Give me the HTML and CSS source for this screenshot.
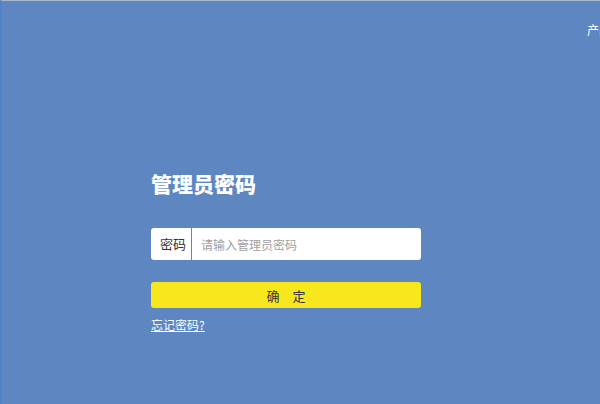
FILE: index.html
```html
<!DOCTYPE html>
<html lang="zh">
<head>
<meta charset="utf-8">
<link rel="stylesheet" href="styles.css">
</head>
<body>
<div class="page">
  <div class="topnav"><span class="product">产品</span></div>
  <div class="login">
    <h1 class="title">管理员密码</h1>
    <div class="field">
      <span class="label">密码</span>
      <input class="input" type="password" placeholder="请输入管理员密码">
    </div>
    <button class="confirm">确&emsp;定</button>
    <a class="forgot" href="#">忘记密码?</a>
  </div>
</div>
</body>
</html>
```
FILE: styles.css
```css
html, body {
  margin: 0;
  padding: 0;
  width: 600px;
  height: 404px;
  overflow: hidden;
}
body {
  font-family: "Microsoft YaHei", "Noto Sans CJK SC", sans-serif;
  background: #5e86c1;
}
.page {
  width: 600px;
  height: 404px;
  box-sizing: border-box;
  border-top: 1px solid #a9b8cf;
  border-left: 2px solid #4f82cb;
  display: flex;
  flex-direction: column;
  overflow: hidden;
}
.topnav {
  display: flex;
  justify-content: flex-end;
  height: 167px;
  padding-top: 21px;
  box-sizing: border-box;
}
.product {
  color: #fff;
  font-size: 12px;
  line-height: 16px;
  margin-right: -11px;
}
.login {
  margin-left: 149px;
  width: 270px;
  display: flex;
  flex-direction: column;
}
.title {
  margin: 0;
  color: #fff;
  font-size: 21px;
  font-weight: 900;
  line-height: 30px;
  height: 30px;
}
.field {
  margin-top: 30px;
  height: 32px;
  background: #fff;
  border-radius: 3px;
  display: flex;
  align-items: center;
}
.label {
  width: 41px;
  box-sizing: border-box;
  padding-left: 9px;
  font-size: 13px;
  color: #333;
  border-right: 1px solid #5e86c1;
  height: 32px;
  line-height: 32px;
}
.input {
  flex: 1;
  border: 0;
  outline: 0;
  background: transparent;
  padding: 0 0 0 9px;
  font-family: inherit;
  font-size: 12px;
  color: #333;
  height: 30px;
}
.input::placeholder {
  color: #a0a0a0;
}
.confirm {
  margin-top: 22px;
  height: 26px;
  border: 0;
  border-radius: 3px;
  background: #f8e71c;
  color: #333;
  font-family: inherit;
  font-size: 13px;
  padding: 0;
}
.forgot {
  margin-top: 9px;
  align-self: flex-start;
  color: #fff;
  font-size: 12px;
  line-height: 16px;
  text-decoration: underline;
}
```
